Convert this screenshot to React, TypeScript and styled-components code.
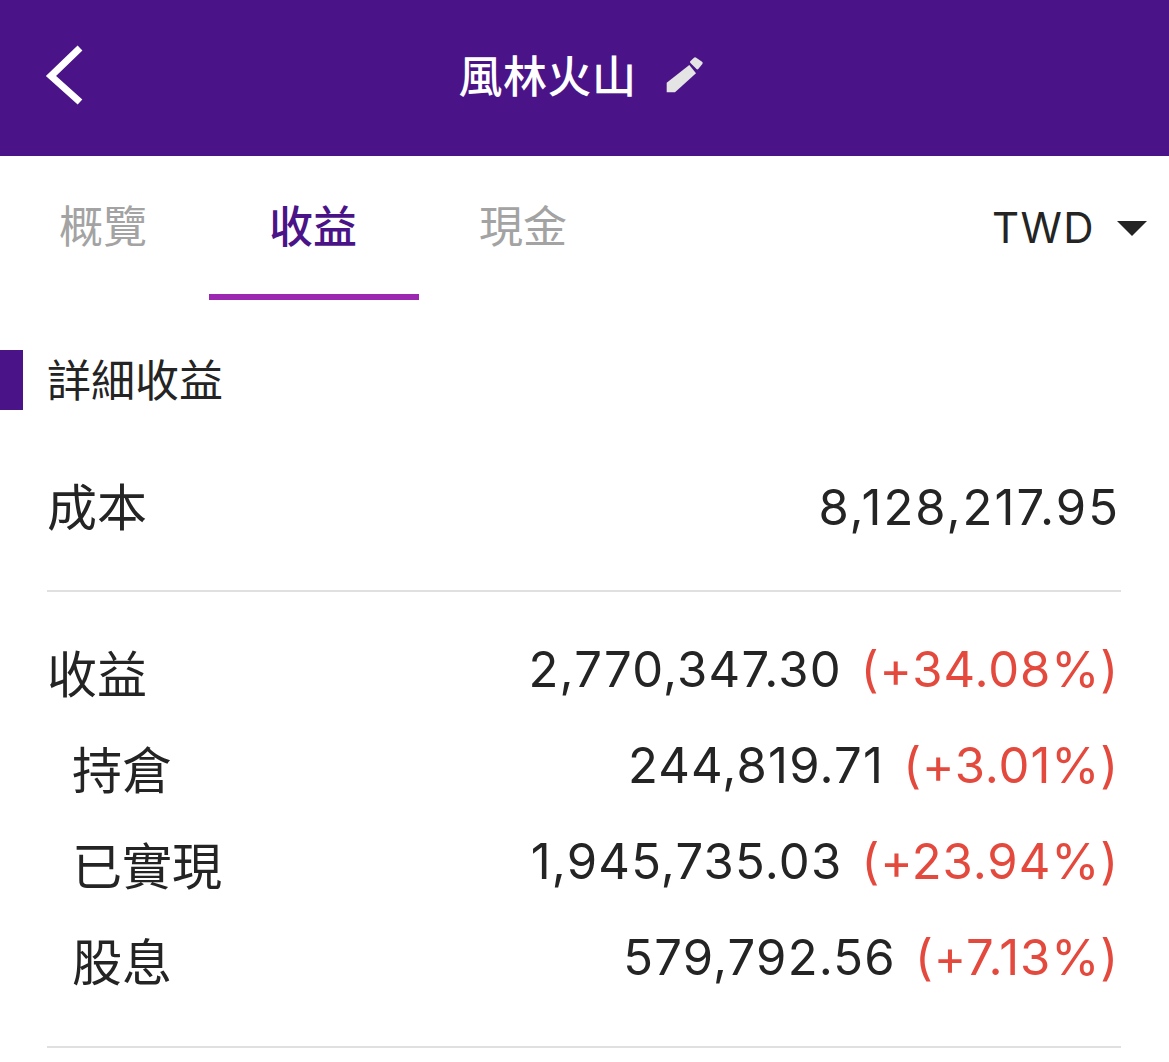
import { createGlobalStyle, styled } from "styled-components";

const Global = createGlobalStyle`
  html, body {
    margin: 0;
    padding: 0;
    background: #ffffff;
  }
  body {
    font-family: Inter, "Noto Sans CJK TC", sans-serif;
  }
`;

const Page = styled.div`
  width: 1169px;
  height: 1062px;
  overflow: hidden;
  background: #ffffff;
  color: #242424;
`;

const Header = styled.header`
  height: 156px;
  background: #4a1488;
  display: flex;
  align-items: center;
  justify-content: center;
  position: relative;
  color: #fff;
`;

const Back = styled.svg`
  position: absolute;
  left: 44px;
  top: 44px;
`;

const Title = styled.h1`
  margin: 0 0 8px;
  font-size: 44px;
  font-weight: 500;
  letter-spacing: 0.5px;
`;

const Pencil = styled.svg`
  margin: 0 6px 6px 28px;
`;

const TabBar = styled.nav`
  height: 144px;
  display: flex;
  align-items: stretch;
  margin-left: -1px;
`;

const Tab = styled.div<{ $active?: boolean }>`
  width: 210px;
  display: flex;
  align-items: center;
  justify-content: center;
  font-size: 44px;
  padding: 0 2px 2px 0;
  box-sizing: border-box;
  font-weight: ${(p) => (p.$active ? 500 : 400)};
  color: ${(p) => (p.$active ? "#4a1488" : "#a3a3a3")};
  border-bottom: 6px solid ${(p) => (p.$active ? "#9c27b0" : "transparent")};
`;

const Currency = styled.div`
  margin-left: auto;
  padding: 0 22px 2px 0;
  display: flex;
  align-items: center;
  gap: 22px;
  font-size: 42px;
  letter-spacing: 1.4px;
`;

const Caret = styled.span`
  width: 0;
  height: 0;
  margin-top: 2px;
  border-left: 15px solid transparent;
  border-right: 15px solid transparent;
  border-top: 15px solid #242424;
`;

const SectionTitle = styled.h2`
  margin: 50px 0 0;
  height: 60px;
  display: flex;
  align-items: center;
  border-left: 23px solid #4a1488;
  padding: 0 0 4px 24px;
  box-sizing: border-box;
  font-size: 44px;
  font-weight: 400;
`;

const Group = styled.section`
  margin: 0 48px 0 47px;
  border-bottom: 2px solid #e0e0e0;
`;

const CostGroup = styled(Group)`
  height: 180px;
  display: flex;
  align-items: center;
`;

const IncomeGroup = styled(Group)`
  padding: 30px 0 40px;
`;

const Row = styled.div<{ $sub?: boolean }>`
  width: 100%;
  height: 96px;
  display: flex;
  align-items: center;
  justify-content: space-between;
  padding-left: ${(p) => (p.$sub ? "25px" : "0")};
  box-sizing: border-box;
`;

const Label = styled.span`
  font-size: 50px;
  margin-top: 2px;
`;

const CostLabel = styled(Label)`
  margin-top: 8px;
`;

const Value = styled.span`
  font-size: 49px;
  letter-spacing: 1.2px;
  padding-right: 2px;
  margin-top: -2px;
`;

const CostValue = styled(Value)`
  margin-top: 14px;
  padding-right: 1px;
  letter-spacing: 2px;
`;

const Gain = styled.span`
  color: #e4493e;
  margin-left: 19px;
  letter-spacing: 0.9px;
`;

const rows = [
  { label: "收益", value: "2,770,347.30", gain: "(+34.08%)" },
  { label: "持倉", value: "244,819.71", gain: "(+3.01%)", sub: true },
  { label: "已實現", value: "1,945,735.03", gain: "(+23.94%)", sub: true },
  { label: "股息", value: "579,792.56", gain: "(+7.13%)", sub: true },
];

export default function App() {
  return (
    <Page>
      <Global />
      <Header>
        <Back width="40" height="64" viewBox="0 0 40 64" fill="none">
          <path d="M36 4 L7 32 L36 58" stroke="#fff" strokeWidth="7" />
        </Back>
        <Title>風林火山</Title>
        <Pencil width="40" height="40" viewBox="0 0 40 40" fill="#e4e4e4">
          <path d="M1.7 37.3 L1.7 27.7 L24.3 10 L31 18.3 L10 37.3 Z" />
          <path
            d="M26.5 7 L30 3.8 L36.2 8 L32.3 12.8 Z"
            stroke="#e4e4e4"
            strokeWidth="3"
            strokeLinejoin="round"
          />
        </Pencil>
      </Header>
      <TabBar>
        <Tab>概覽</Tab>
        <Tab $active>收益</Tab>
        <Tab>現金</Tab>
        <Currency>
          TWD
          <Caret />
        </Currency>
      </TabBar>
      <SectionTitle>詳細收益</SectionTitle>
      <CostGroup>
        <Row>
          <CostLabel>成本</CostLabel>
          <CostValue>8,128,217.95</CostValue>
        </Row>
      </CostGroup>
      <IncomeGroup>
        {rows.map((r) => (
          <Row key={r.label} $sub={r.sub}>
            <Label>{r.label}</Label>
            <Value>
              {r.value}
              <Gain>{r.gain}</Gain>
            </Value>
          </Row>
        ))}
      </IncomeGroup>
    </Page>
  );
}
